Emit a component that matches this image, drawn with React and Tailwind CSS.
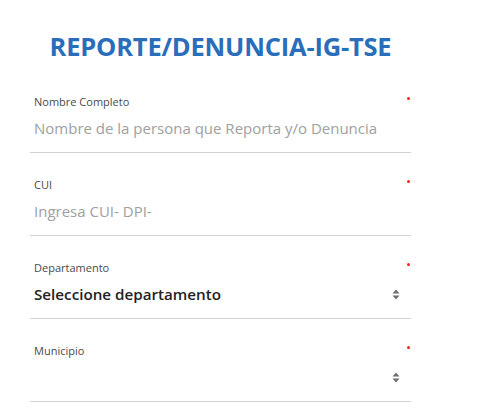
import React from 'react';

const fields = [
  { label: 'Nombre Completo', placeholder: 'Nombre de la persona que Reporta y/o Denuncia' },
  { label: 'CUI', placeholder: 'Ingresa CUI- DPI-' },
  { label: 'Departamento', value: 'Seleccione departamento', select: true },
  { label: 'Municipio', value: '', select: true },
];

function SortArrows() {
  return (
    <svg width="8" height="11" viewBox="0 0 8 11" className="shrink-0">
      <path d="M4 0.5 L7.5 4.5 L0.5 4.5 Z" fill="#6f6f6f" />
      <path d="M4 10.5 L7.5 6.5 L0.5 6.5 Z" fill="#6f6f6f" />
    </svg>
  );
}

function Field({ label, placeholder, value, select }) {
  return (
    <div className="relative h-[83px] border-b border-[#d2d2d2] pt-[25px] pl-1">
      <span className="absolute right-[1px] top-[27px] w-[3px] h-[3px] rounded-full bg-[#ff1f1f]" />
      <div className="text-[11px] leading-[14px] text-[#4a4a4a]">{label}</div>
      <div className="flex items-center justify-between h-[24px] mt-[7px] pr-[11px] whitespace-nowrap">
        {select ? (
          <span className="text-[15.2px] font-semibold text-[#222]">{value}</span>
        ) : (
          <span className="text-[15px] text-[#a0a0a0]">{placeholder}</span>
        )}
        {select && <SortArrows />}
      </div>
    </div>
  );
}

export default function App() {
  return (
    <div className="w-[500px] h-[410px] bg-white overflow-hidden font-['Open_Sans',sans-serif]">
      <div className="w-[381px] ml-[30px] pt-[29px]">
        <h1 className="text-center text-[25.5px] leading-[34px] font-bold text-[#2a6ebb] tracking-[-0.2px]">
          REPORTE/DENUNCIA-IG-TSE
        </h1>
        <div className="mt-[7px]">
          {fields.map((f) => (
            <Field key={f.label} {...f} />
          ))}
        </div>
      </div>
    </div>
  );
}
